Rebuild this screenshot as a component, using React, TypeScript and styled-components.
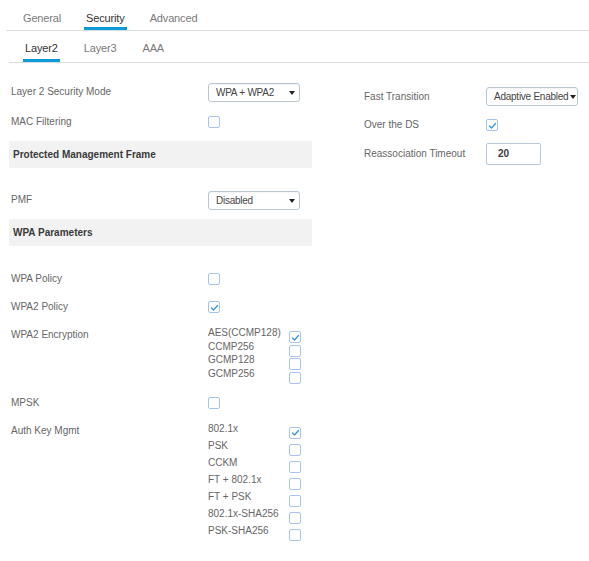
import React from 'react';
import styled, { createGlobalStyle } from 'styled-components';

const GlobalStyle = createGlobalStyle`
  html, body {
    margin: 0;
    padding: 0;
    background: #ffffff;
  }
  body {
    font-family: "Liberation Sans", Arial, Helvetica, sans-serif;
    color: #666666;
  }
`;

const Page = styled.div`
  width: 589px;
  height: 561px;
  overflow: hidden;
  background: #ffffff;
`;

const TabBar = styled.div<{ $inset: number; $lead: number; $gap: number }>`
  display: flex;
  gap: ${({ $gap }) => $gap}px;
  margin-left: ${({ $inset }) => $inset}px;
  padding-left: ${({ $lead }) => $lead}px;
  border-bottom: 1px solid #dcdcdc;
`;

const Tab = styled.div<{ $active?: boolean; $top: number; $bottom: number }>`
  padding: ${({ $top }) => $top}px 2px ${({ $bottom }) => $bottom}px;
  font-size: 11px;
  line-height: 13px;
  letter-spacing: -0.15px;
  color: ${({ $active }) => ($active ? '#333333' : '#7a7a7a')};
  border-bottom: 3px solid ${({ $active }) => ($active ? '#0d9ad8' : 'transparent')};
`;

const Body = styled.div`
  display: flex;
`;

const LeftColumn = styled.div`
  width: 303px;
  margin-left: 9px;
  display: flex;
  flex-direction: column;
`;

const RightColumn = styled.div`
  margin-left: 50px;
  padding-top: 19px;
  display: flex;
  flex-direction: column;
`;

const Row = styled.div<{ $h: number; $mt?: number; $labelW?: number }>`
  display: grid;
  grid-template-columns: ${({ $labelW }) => $labelW ?? 197}px 1fr;
  align-items: center;
  height: ${({ $h }) => $h}px;
  margin-top: ${({ $mt }) => $mt ?? 0}px;
  padding-left: 2px;
`;

const MultiRow = styled.div<{ $mt?: number }>`
  display: grid;
  grid-template-columns: 197px 1fr;
  align-items: start;
  margin-top: ${({ $mt }) => $mt ?? 0}px;
  padding-left: 2px;
`;

const Label = styled.div`
  font-size: 10px;
  line-height: 12px;
  color: #666666;
  white-space: nowrap;
`;

const TopLabel = styled(Label)`
  margin-top: 2px;
`;

const SectionHeader = styled.div<{ $mt: number }>`
  height: 27px;
  margin-top: ${({ $mt }) => $mt}px;
  display: flex;
  align-items: center;
  padding-left: 4px;
  background: #f2f2f2;
  font-size: 10px;
  font-weight: 700;
  color: #3a3a3a;
`;

const SelectBox = styled.div<{ $pad: number }>`
  box-sizing: border-box;
  width: 92px;
  height: 19px;
  display: flex;
  align-items: center;
  justify-content: space-between;
  padding: 0 4px 0 ${({ $pad }) => $pad}px;
  border: 1px solid #b9c6d2;
  border-radius: 3px;
  box-shadow: inset 0 1px 1px rgba(0, 0, 0, 0.04);
  font-size: 10px;
  letter-spacing: -0.25px;
  color: #444444;
  white-space: nowrap;
  background: #ffffff;
`;

const Caret = styled.span`
  width: 0;
  height: 0;
  border-left: 3px solid transparent;
  border-right: 3px solid transparent;
  border-top: 4px solid #222222;
  margin-top: 1px;
  margin-left: 2px;
  flex: none;
`;

const TextInput = styled.div`
  box-sizing: border-box;
  width: 55px;
  height: 22px;
  display: flex;
  align-items: center;
  padding-left: 11px;
  border: 1px solid #b9c8d6;
  border-radius: 2px;
  font-size: 10px;
  font-weight: 700;
  color: #3a3a3a;
`;

const Box = styled.span<{ $mt?: number }>`
  box-sizing: border-box;
  display: inline-flex;
  align-items: center;
  justify-content: center;
  width: 12px;
  height: 12px;
  margin-top: ${({ $mt }) => $mt ?? 0}px;
  border: 1.5px solid #a7c4ef;
  border-radius: 2px;
  background: #ffffff;
  flex: none;
`;

const OptionList = styled.div`
  display: flex;
  flex-direction: column;
`;

const Option = styled.div<{ $h: number }>`
  display: grid;
  grid-template-columns: 81px 12px;
  align-items: start;
  height: ${({ $h }) => $h}px;
`;

const OptionText = styled.span`
  font-size: 10px;
  line-height: 12px;
  color: #666666;
  white-space: nowrap;
`;

const Checkbox: React.FC<{ checked?: boolean; mt?: number }> = ({ checked, mt }) => (
  <Box $mt={mt}>
    {checked && (
      <svg width="9" height="9" viewBox="0 0 9 9">
        <polyline
          points="1.5,5 3.5,7 7.5,2.5"
          fill="none"
          stroke="#3796dd"
          strokeWidth="1.3"
          strokeLinecap="round"
          strokeLinejoin="round"
        />
      </svg>
    )}
  </Box>
);

const Select: React.FC<{ value: string; pad?: number }> = ({ value, pad }) => (
  <SelectBox $pad={pad ?? 7}>
    {value}
    <Caret />
  </SelectBox>
);

const encryption = [
  { name: 'AES(CCMP128)', checked: true },
  { name: 'CCMP256' },
  { name: 'GCMP128' },
  { name: 'GCMP256' },
];

const authKeys = [
  { name: '802.1x', checked: true },
  { name: 'PSK' },
  { name: 'CCKM' },
  { name: 'FT + 802.1x' },
  { name: 'FT + PSK' },
  { name: '802.1x-SHA256' },
  { name: 'PSK-SHA256' },
];

const App: React.FC = () => {
  return (
    <>
      <GlobalStyle />
      <Page>
        <TabBar $inset={6} $lead={15} $gap={21}>
          <Tab $top={12} $bottom={2}>General</Tab>
          <Tab $top={12} $bottom={2} $active>Security</Tab>
          <Tab $top={12} $bottom={2}>Advanced</Tab>
        </TabBar>
        <TabBar $inset={9} $lead={14} $gap={22}>
          <Tab $top={11} $bottom={4} $active>Layer2</Tab>
          <Tab $top={11} $bottom={4}>Layer3</Tab>
          <Tab $top={11} $bottom={4}>AAA</Tab>
        </TabBar>

        <Body>
          <LeftColumn>
            <Row $h={28} $mt={15}>
              <Label>Layer 2 Security Mode</Label>
              <Select value="WPA + WPA2" />
            </Row>
            <Row $h={32}>
              <Label>MAC Filtering</Label>
              <Checkbox />
            </Row>
            <SectionHeader $mt={3}>Protected Management Frame</SectionHeader>
            <Row $h={28} $mt={18}>
              <Label>PMF</Label>
              <Select value="Disabled" />
            </Row>
            <SectionHeader $mt={5}>WPA Parameters</SectionHeader>
            <Row $h={28} $mt={19}>
              <Label>WPA Policy</Label>
              <Checkbox />
            </Row>
            <Row $h={28}>
              <Label>WPA2 Policy</Label>
              <Checkbox checked />
            </Row>
            <MultiRow $mt={6}>
              <TopLabel>WPA2 Encryption</TopLabel>
              <OptionList>
                {encryption.map((o) => (
                  <Option key={o.name} $h={13.7}>
                    <OptionText>{o.name}</OptionText>
                    <Checkbox checked={o.checked} mt={4} />
                  </Option>
                ))}
              </OptionList>
            </MultiRow>
            <Row $h={28} $mt={7}>
              <Label>MPSK</Label>
              <Checkbox />
            </Row>
            <MultiRow $mt={6}>
              <TopLabel>Auth Key Mgmt</TopLabel>
              <OptionList>
                {authKeys.map((o) => (
                  <Option key={o.name} $h={17}>
                    <OptionText>{o.name}</OptionText>
                    <Checkbox checked={o.checked} mt={4} />
                  </Option>
                ))}
              </OptionList>
            </MultiRow>
          </LeftColumn>

          <RightColumn>
            <Row $h={29} $labelW={122}>
              <Label>Fast Transition</Label>
              <Select value="Adaptive Enabled" pad={7} />
            </Row>
            <Row $h={28} $labelW={122}>
              <Label>Over the DS</Label>
              <Checkbox checked />
            </Row>
            <Row $h={29} $labelW={122}>
              <Label>Reassociation Timeout</Label>
              <TextInput>20</TextInput>
            </Row>
          </RightColumn>
        </Body>
      </Page>
    </>
  );
};

export default App;
